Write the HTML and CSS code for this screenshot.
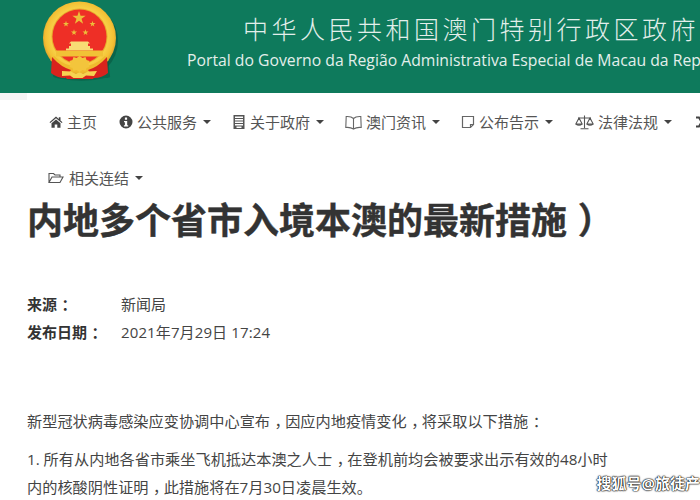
FILE: index.html
```html
<!DOCTYPE html>
<html lang="zh-CN">
<head>
<meta charset="utf-8">
<title>内地多个省市入境本澳的最新措施</title>
<link rel="stylesheet" href="styles.css">
</head>
<body>
<header class="banner">
  <svg class="emblem" viewBox="0 0 76 80" width="76" height="80" aria-hidden="true">
    <defs>
      <radialGradient id="gold" cx="50%" cy="48%" r="52%"><stop offset="0.76" stop-color="#f7cf45"/><stop offset="0.9" stop-color="#f4c034"/><stop offset="1" stop-color="#dc9f28"/></radialGradient>
      <path id="star" d="M0 -1 L.225 -.309 .951 -.309 .363 .118 .588 .809 0 .382 -.588 .809 -.363 .118 -.951 -.309 -.225 -.309Z" fill="#edbe3a"/>
    </defs>
    <ellipse cx="38.500" cy="40" rx="36.500" ry="37" fill="#07523d" opacity=".55"/>
    <path d="M9 62 L10 56 H63 L65 73 Q66 75 60 75 Q40 80 16 76 Q7 75 8 72Z" fill="#07523d" opacity=".5" transform="translate(2 2)"/>
    <circle cx="36.500" cy="37" r="36.500" fill="url(#gold)"/>
    <circle cx="36.500" cy="35.500" r="28" fill="#e8a92c"/>
    <circle cx="36.500" cy="35.500" r="27" fill="#ee2f26"/>
    <use href="#star" transform="translate(36 17) scale(7)"/>
    <use href="#star" transform="translate(23 23) scale(3.200)"/>
    <use href="#star" transform="translate(49.500 23) scale(3.200)"/>
    <use href="#star" transform="translate(31 31.500) scale(3.200)"/>
    <use href="#star" transform="translate(42.500 31.500) scale(3.200)"/>
    <path d="M26 42.500 L28 40.500 H45 L47 42.500 H45 V45 H47 V47.500 H50 V49.500 H23 V47.500 H26 V45 H28 V42.500Z" fill="#f8dc74"/>
    <rect x="13" y="49.500" width="47" height="6" fill="#f1c136"/>
    <path d="M11 55 Q22 66 36.500 66 Q51 66 62 55 L66 59 Q52 72 36.500 72 Q21 72 7 59 Z" fill="#efba2e"/>
    <path d="M9 56 L10 57 Q18 66 28 69 L22 77 Q14 77 8 72 Z M64 56 L63 57 Q55 66 45 69 L51 77 Q59 77 65 72 Z" fill="#d9231d"/>
    <path d="M20 74 H53 L50 78 H24Z" fill="#d9231d"/>
    <path d="M36.500 55 l3 2 3 -1 1 3 3 1 -1 3 1 3 -3 1 -1 3 -3 -1 -3 2 -3 -2 -3 1 -1 -3 -3 -1 1 -3 -1 -3 3 -1 1 -3 3 1z" fill="#f3c53c"/>
    <path d="M19 70 l9 .500 5 2.500 q3.500 -3 7 0 l5 -2.500 9 -.500 -3 5 -8 -.500 -3.500 2.500 h-9 l-3.500 -2.500 -8 .500z" fill="#f6d251"/>
  </svg>
  <div class="banner-text">
    <div class="banner-zh">中华人民共和国澳门特别行政区政府入口网站</div>
    <div class="banner-pt">Portal do Governo da Região Administrativa Especial de Macau da República Popular da China</div>
  </div>
</header>

<nav class="nav">
  <ul class="nav-row">
    <li class="nav-item"><svg class="ic" viewBox="0 0 14 14"><path d="M7 1.500 0.500 7.200 1.300 8.100 7 3.200 12.700 8.100 13.500 7.200 11.500 5.400V2.200H9.800V3.900ZM2.500 8.300V12.700H5.700V9.500H8.300V12.700H11.500V8.300L7 4.500Z" fill="#444"/></svg>主页</li>
    <li class="nav-item gap-1"><svg class="ic" viewBox="0 0 14 14"><path fill-rule="evenodd" d="M7 .5a6.500 6.500 0 1 0 0 13A6.500 6.500 0 0 0 7 .5ZM5.900 2.600h2.200v2.100H5.900ZM5 6h3.200v4.300h1v1.300H4.900v-1.300h1V7.300H5Z" fill="#444"/></svg>公共服务<span class="caret"></span></li>
    <li class="nav-item"><svg class="ic" viewBox="0 0 14 14"><path fill-rule="evenodd" d="M1.500 0h11v14h-11ZM3 1.500v1.400h8V1.500Zm0 2.500v1.400h8V4Zm0 2.500v1.400h8V6.500Zm0 2.500v1.400h8V9Zm1.500 2.400v1.600h5v-1.600Z" fill="#555"/></svg>关于政府<span class="caret"></span></li>
    <li class="nav-item"><svg class="ic book" viewBox="0 0 17 15"><path d="M8.500 3.500C7 2 4 1.300 1.200 1.500L.8 12.500c3-.3 5.700.2 7.700 1.500 2-1.300 4.700-1.800 7.700-1.500L15.800 1.500C13 1.300 10 2 8.500 3.500Zm0 0V14" fill="none" stroke="#666" stroke-width="1.100"/></svg>澳门资讯<span class="caret"></span></li>
    <li class="nav-item"><svg class="ic" viewBox="0 0 14 14"><path d="M1.500 1.500h11v8l-3 3h-8Zm8 11v-3h3" fill="none" stroke="#666" stroke-width="1.200"/></svg>公布告示<span class="caret"></span></li>
    <li class="nav-item gap-1"><svg class="ic scale" viewBox="0 0 19 15"><path d="M9.500 .5v12.500M5.500 13.800h8M3 3h13M4 3 .8 9Q4 11.500 7.200 9ZM15 3 11.800 9Q15 11.500 18.200 9ZM1 9h6M12 9h6" fill="none" stroke="#555" stroke-width="1.100"/></svg>法律法规<span class="caret"></span></li>
    <li class="nav-item gap-2"><svg class="ic" viewBox="0 0 14 14"><path d="M1 2.500h3l5 9h4M1 11.500h3l5-9h4" fill="none" stroke="#444" stroke-width="2"/></svg>其他</li>
  </ul>
  <ul class="nav-row second">
    <li class="nav-item"><svg class="ic folder" viewBox="0 0 16 14"><path d="M1 11.500V2.500h4.500l1.500 1.500h5v2M1 11.500h11l3-5.500H4Z" fill="none" stroke="#555" stroke-width="1.100"/></svg>相关连结<span class="caret"></span></li>
  </ul>
</nav>

<main class="article">
  <h1 class="headline">内地多个省市入境本澳的最新措施<span class="punct">）</span></h1>
  <dl class="meta">
    <div class="meta-row"><dt>来源<span class="punct">：</span></dt><dd>新闻局</dd></div>
    <div class="meta-row"><dt>发布日期<span class="punct">：</span></dt><dd class="spaced">2021年7月29日 17:24</dd></div>
  </dl>
  <p class="lead">新型冠状病毒感染应变协调中心宣布<span class="punct">，</span>因应内地疫情变化<span class="punct">，</span>将采取以下措施<span class="punct">：</span></p>
  <p class="item">1. 所有从内地各省市乘坐飞机抵达本澳之人士<span class="punct">，</span>在登机前均会被要求出示有效的48小时内的核酸阴性证明<span class="punct">，</span>此措施将在7月30日凌晨生效。</p>
</main>
<div class="watermark">搜狐号@旅徒产</div>
</body>
</html>
```

FILE: styles.css
```css
html, body { margin: 0; padding: 0; }
body {
  width: 700px;
  height: 500px;
  overflow: hidden;
  position: relative;
  background: #fff;
  color: #333;
  font-family: "Open Sans", "Noto Sans CJK SC", sans-serif;
}
.banner {
  height: 93px;
  background: #0e7a5c;
  display: flex;
  padding-left: 43px;
  overflow: hidden;
  white-space: nowrap;
}
.emblem { flex: none; margin-top: 1px; }
.banner-text { margin-left: 68px; color: #e3efeb; }
.banner-zh {
  margin-top: 12px;
  margin-left: 56px;
  font-size: 25px;
  line-height: 34px;
  letter-spacing: 3.500px;
  font-weight: 300;
}
.banner-pt {
  margin-top: 3px;
  font-size: 15.750px;
  line-height: 22px;
}
.nav { height: 106px; overflow: hidden; position: relative; }
.nav::before {
  content: "";
  position: absolute;
  left: 0;
  top: 0;
  width: 27px;
  height: 7px;
  background: #f5f5f5;
}
.nav-row {
  list-style: none;
  margin: 0;
  padding: 19px 0 0 49px;
  display: flex;
  gap: 21px;
  white-space: nowrap;
  width: 800px;
}
.nav-row.second { padding-top: 36px; padding-left: 48px; }
.nav-item {
  display: flex;
  align-items: center;
  font-size: 15px;
  line-height: 20px;
  color: #555;
}
.gap-1 { margin-left: 1px; }
.gap-2 { margin-left: 2px; }
.ic { width: 14px; height: 14px; margin-right: 4px; flex: none; }
.ic.book { width: 17px; height: 15px; }
.ic.scale { width: 19px; height: 15px; }
.ic.folder { width: 16px; margin-right: 5px; }
.caret {
  width: 0;
  height: 0;
  margin-left: 6px;
  border-top: 4px solid #444;
  border-left: 4px solid transparent;
  border-right: 4px solid transparent;
}
.punct { font-feature-settings: "halt"; padding: 0 .2em 0 .3em; }
.article { padding: 0 27px; width: 590px; }
.headline {
  margin: 0;
  font-size: 36px;
  line-height: 44px;
  font-weight: 700;
  color: #333;
  white-space: nowrap;
  -webkit-text-stroke: .4px #333;
}
.meta { margin: 47px 0 0; }
.meta-row { display: flex; height: 27.500px; align-items: center; font-size: 15px; }
.meta dt { width: 94px; font-weight: 700; }
.meta dd { margin: 0; color: #444; }
.meta dd.spaced { letter-spacing: .12px; }
.lead { margin: 62px 0 0; font-size: 15.200px; line-height: 28px; color: #444; }
.item { margin: 10px 0 0; font-size: 15.200px; line-height: 28px; color: #444; }
.watermark {
  position: absolute;
  right: 0;
  bottom: 7px;
  font-size: 15px;
  line-height: 20px;
  font-weight: 700;
  color: #fff;
  white-space: nowrap;
  text-shadow: 0 0 2px #000, 0 0 1px #000, 0 0 1px #000;
}
```
